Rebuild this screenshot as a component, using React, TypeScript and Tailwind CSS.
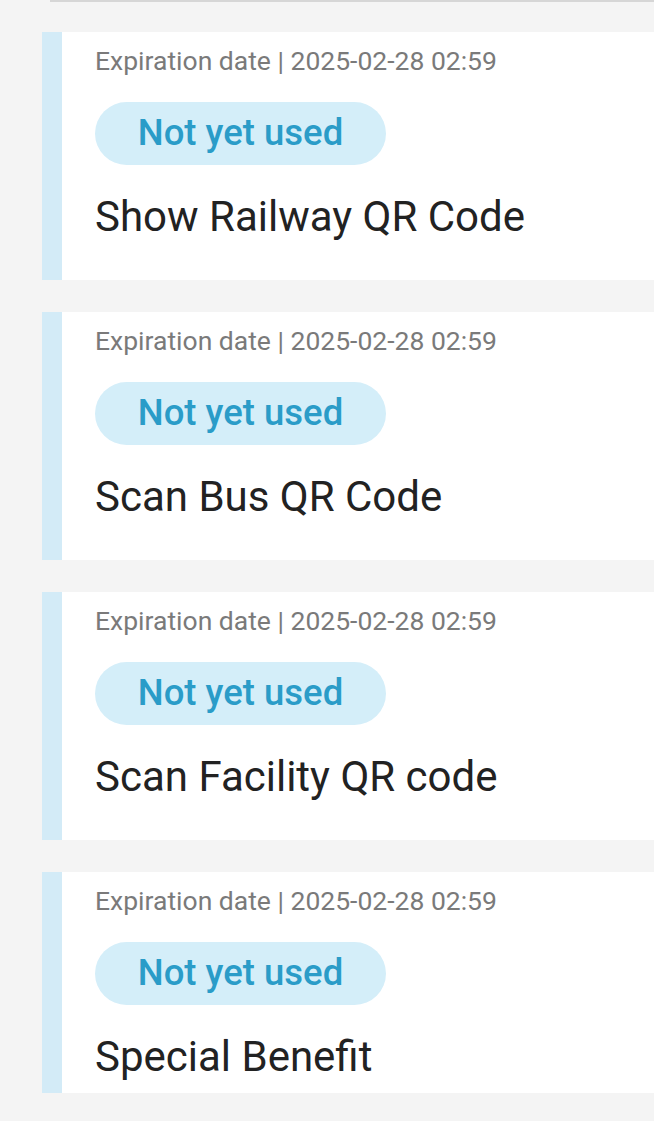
import React from "react";

const items = [
  { title: "Show Railway QR Code", last: false },
  { title: "Scan Bus QR Code", last: false },
  { title: "Scan Facility QR code", last: false },
  { title: "Special Benefit", last: true },
];

export default function App() {
  return (
    <div
      className="w-[654px] h-[1121px] bg-[#f4f4f4] overflow-hidden"
      style={{ fontFamily: "Roboto, 'Noto Sans', sans-serif" }}
    >
      <div className="ml-[50px] h-[2px] bg-[#d6d6d6]" />
      <div className="flex flex-col gap-[32px] pt-[30px] pl-[42px]">
        {items.map((it) => (
          <div
            key={it.title}
            className={`flex bg-white ${it.last ? "h-[221px]" : "h-[248px]"}`}
          >
            <div className="w-[20px] bg-[#d3ebf7]" />
            <div className="flex flex-col pl-[33px] pt-[14px]">
              <div className="text-[26.5px] leading-[30px] text-[#7a7a7a]">
                Expiration date | 2025-02-28 02:59
              </div>
              <div className="mt-[26px] w-[291px] h-[63px] rounded-full bg-[#d4eef9] flex items-center justify-center text-[36.5px] text-[#2a9cc8] font-medium">
                Not yet used
              </div>
              <div className="mt-[28px] text-[42px] leading-[48px] text-[#222222]">
                {it.title}
              </div>
            </div>
          </div>
        ))}
      </div>
    </div>
  );
}
